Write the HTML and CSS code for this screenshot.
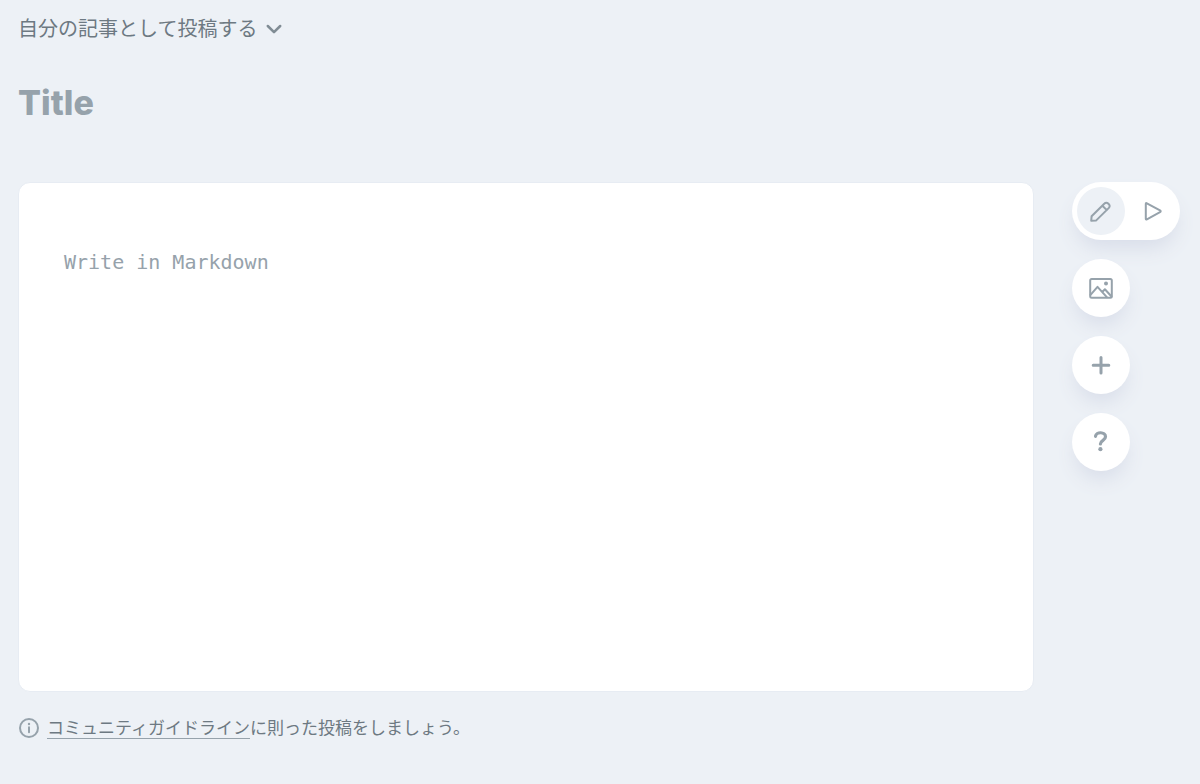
FILE: index.html
```html
<!DOCTYPE html>
<html lang="ja">
<head>
<meta charset="utf-8">
<meta name="viewport" content="width=device-width, initial-scale=1">
<title>記事の編集</title>
<link rel="stylesheet" href="styles.css">
</head>
<body>
<main class="page">
  <header class="head">
    <div class="publisher">
      <select class="publisher-select" aria-label="投稿者">
        <option>自分の記事として投稿する</option>
      </select>
      <svg class="chevron" viewBox="0 0 16 10" aria-hidden="true"><path d="M1.800 2 8 8.200 14.200 2"/></svg>
    </div>
    <input class="title" type="text" placeholder="Title" aria-label="Title">
  </header>
  <div class="workspace">
    <textarea class="editor" placeholder="Write in Markdown" aria-label="Markdown"></textarea>
    <aside class="tools">
      <div class="mode">
        <button class="mode-button active" type="button" aria-label="編集">
          <svg class="icon" viewBox="0 0 24 24"><path d="M2.200 21.800 2.600 17.300 15.500 4.500a2.500 2.500 0 0 1 3.600 0l.8.8a2.500 2.500 0 0 1 0 3.600L7 21.600l-4.800.2ZM13.400 6.700l4.400 4.400"/></svg>
        </button>
        <button class="mode-button" type="button" aria-label="プレビュー">
          <svg class="icon" viewBox="0 0 24 24"><path d="M5.800 4.900v14.800q0 1.200 1.100.6L20 13.200q1.400-.9 0-1.800L6.900 4.300Q5.800 3.700 5.800 4.900Z"/></svg>
        </button>
      </div>
      <button class="round-button" type="button" aria-label="画像を追加">
        <svg class="icon" viewBox="0 0 24 24"><rect x="1.200" y="2.900" width="21.600" height="18.800" rx="1.500"/><path d="m1.500 18.800 7-8 9.300 10.400M13.300 16l2.600-2.700 6.600 7.200"/><circle class="dot" cx="17" cy="7.500" r="2"/></svg>
      </button>
      <button class="round-button" type="button" aria-label="挿入">
        <svg class="icon bold" viewBox="0 0 24 24"><path d="M12 4.400v15.600M4.200 12.200h15.600"/></svg>
      </button>
      <button class="round-button" type="button" aria-label="ヘルプ">
        <svg class="icon help" viewBox="0 0 24 24"><path d="M6.500 6.300C7.100 1.400 16.500 1.600 16.500 6.700c0 3.800-5.100 3.500-5.100 7.300"/><circle class="dot" cx="11.400" cy="19.200" r="2.100"/></svg>
      </button>
    </aside>
  </div>
  <footer class="notice">
    <svg class="info" viewBox="0 0 20 20" aria-hidden="true"><circle cx="10" cy="10" r="9"/><path d="M10 9.300v5"/><circle class="dot" cx="10" cy="6" r="1.200"/></svg>
    <p class="notice-text"><a class="guide" href="#">コミュニティガイドライン</a>に則った投稿をしましょう。</p>
  </footer>
</main>
</body>
</html>
```
FILE: styles.css
```css
* {
  box-sizing: border-box;
}

body {
  margin: 0;
  background: #edf1f6;
  color: #6d7982;
  font-family: Inter, "Noto Sans CJK JP", sans-serif;
}

button,
input,
select,
textarea {
  margin: 0;
  padding: 0;
  border: 0;
  background: none;
  color: inherit;
  font: inherit;
}

svg {
  display: block;
  flex: none;
  fill: none;
  stroke: #96a2ab;
  stroke-width: 2;
  stroke-linecap: round;
  stroke-linejoin: round;
}

.dot {
  fill: #96a2ab;
  stroke: none;
}

.page {
  display: flex;
  flex-direction: column;
  min-height: 100vh;
  padding: 13px 20px 42px 18px;
}

.head {
  display: flex;
  flex-direction: column;
  gap: 34px;
  margin-bottom: 57px;
}

.publisher {
  display: flex;
  align-items: center;
  gap: 8px;
}

.publisher-select {
  appearance: none;
  height: 32px;
  font-size: 20px;
  cursor: pointer;
}

.chevron {
  width: 16px;
  height: 10px;
  stroke: #808c94;
  stroke-width: 2.5;
}

.title {
  width: 100%;
  height: 46px;
  font-size: 34px;
  font-weight: 800;
}

::placeholder {
  color: #96a2ab;
  opacity: 1;
}

.workspace {
  display: flex;
  flex: 1;
  gap: 38px;
}

.editor {
  flex: 1;
  min-width: 0;
  min-height: 360px;
  padding: 63px 45px;
  border: 1px solid #e7ecf3;
  border-radius: 12px;
  background: #fff;
  font-family: "DejaVu Sans Mono", "Noto Sans CJK JP", monospace;
  font-size: 20px;
  line-height: 32px;
  resize: none;
}

.tools {
  display: flex;
  flex-direction: column;
  align-items: flex-start;
  gap: 19px;
}

.mode,
.round-button {
  border-radius: 29px;
  background: #fff;
  box-shadow: 0 12px 20px -4px #d8dde9;
}

.mode {
  display: flex;
  gap: 3px;
  padding: 5px 4px 5px 5px;
}

.mode-button,
.round-button {
  display: flex;
  align-items: center;
  justify-content: center;
  cursor: pointer;
}

.mode-button {
  width: 48px;
  height: 48px;
  border-radius: 50%;
}

.active {
  background: #edf1f6;
}

.round-button {
  width: 58px;
  height: 58px;
}

.icon {
  width: 24px;
  height: 24px;
}

.bold {
  stroke-width: 3;
}

.help {
  stroke-width: 3.2;
}

.notice {
  display: flex;
  align-items: center;
  gap: 8px;
  margin-top: 22px;
  padding-left: 1px;
}

.info {
  width: 20px;
  height: 20px;
}

.notice-text {
  margin: 0;
  font-size: 17px;
  line-height: 28px;
}

.guide {
  color: inherit;
  text-decoration: underline 1px #96a2ab;
  text-underline-offset: 4px;
}
```
